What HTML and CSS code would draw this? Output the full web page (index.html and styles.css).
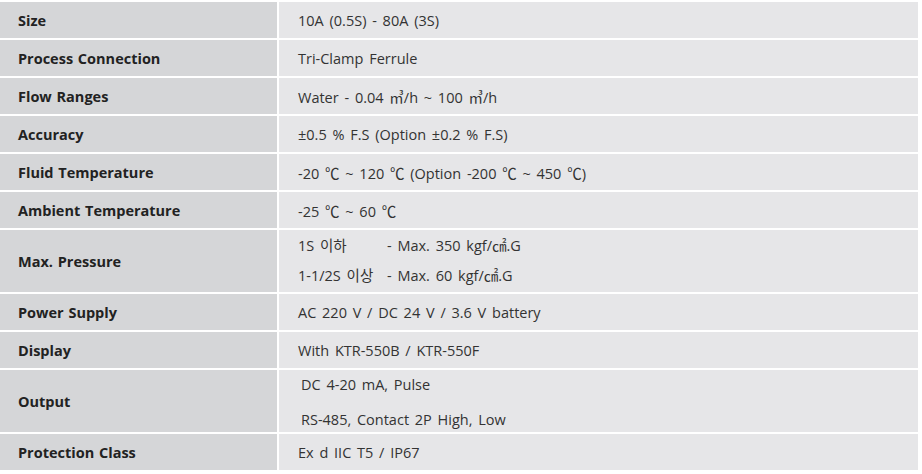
FILE: index.html
```html
<!DOCTYPE html>
<html lang="ko">
<head>
<meta charset="utf-8">
<title>Specifications</title>
<link rel="stylesheet" href="styles.css">
</head>
<body>
<div class="spec">
  <div class="label">Size</div>
  <div class="value">10A (0.5S) - 80A (3S)</div>

  <div class="label">Process Connection</div>
  <div class="value">Tri-Clamp Ferrule</div>

  <div class="label">Flow Ranges</div>
  <div class="value">Water - 0.04 ㎥/h ~ 100 ㎥/h</div>

  <div class="label">Accuracy</div>
  <div class="value">±0.5 % F.S (Option ±0.2 % F.S)</div>

  <div class="label">Fluid Temperature</div>
  <div class="value">-20 ℃ ~ 120 ℃ (Option -200 ℃ ~ 450 ℃)</div>

  <div class="label">Ambient Temperature</div>
  <div class="value">-25 ℃ ~ 60 ℃</div>

  <div class="label tall">Max. Pressure</div>
  <div class="value tall pressure">
    <div class="line"><span class="key">1S 이하</span><span>- Max. 350 kgf/㎠.G</span></div>
    <div class="line"><span class="key">1-1/2S 이상</span><span>- Max. 60 kgf/㎠.G</span></div>
  </div>

  <div class="label">Power Supply</div>
  <div class="value">AC 220 V / DC 24 V / 3.6 V battery</div>

  <div class="label">Display</div>
  <div class="value">With KTR-550B / KTR-550F</div>

  <div class="label tall">Output</div>
  <div class="value tall output">
    <div class="line">DC 4-20 mA, Pulse</div>
    <div class="line">RS-485, Contact 2P High, Low</div>
  </div>

  <div class="label">Protection Class</div>
  <div class="value">Ex d IIC T5 / IP67</div>
</div>
</body>
</html>
```

FILE: styles.css
```css
html, body {
  margin: 0;
  padding: 0;
  background: #ffffff;
}

body {
  padding-top: 2px;
  font-family: "Open Sans", "Noto Sans CJK KR", sans-serif;
  font-size: 14.5px;
}

.spec {
  width: 918px;
  display: grid;
  grid-template-columns: 277px 1fr;
  column-gap: 2px;
  row-gap: 2px;
}

.label {
  height: 36px;
  background: #d5d6d8;
  color: #222;
  font-weight: 700;
  word-spacing: 1px;
  padding-left: 18px;
  display: flex;
  align-items: center;
}

.value {
  height: 36px;
  background: #e6e6e8;
  color: #333;
  word-spacing: 2px;
  padding-left: 19px;
  display: flex;
  align-items: center;
}

.tall {
  height: 62px;
}

.pressure {
  flex-direction: column;
  align-items: flex-start;
  justify-content: center;
  gap: 10px;
}

.output {
  flex-direction: column;
  align-items: flex-start;
  justify-content: center;
  gap: 15px;
  padding-left: 22px;
  padding-top: 3px;
  box-sizing: border-box;
}

.line {
  line-height: 20px;
  white-space: nowrap;
}

.key {
  display: inline-block;
  width: 89px;
}
```
